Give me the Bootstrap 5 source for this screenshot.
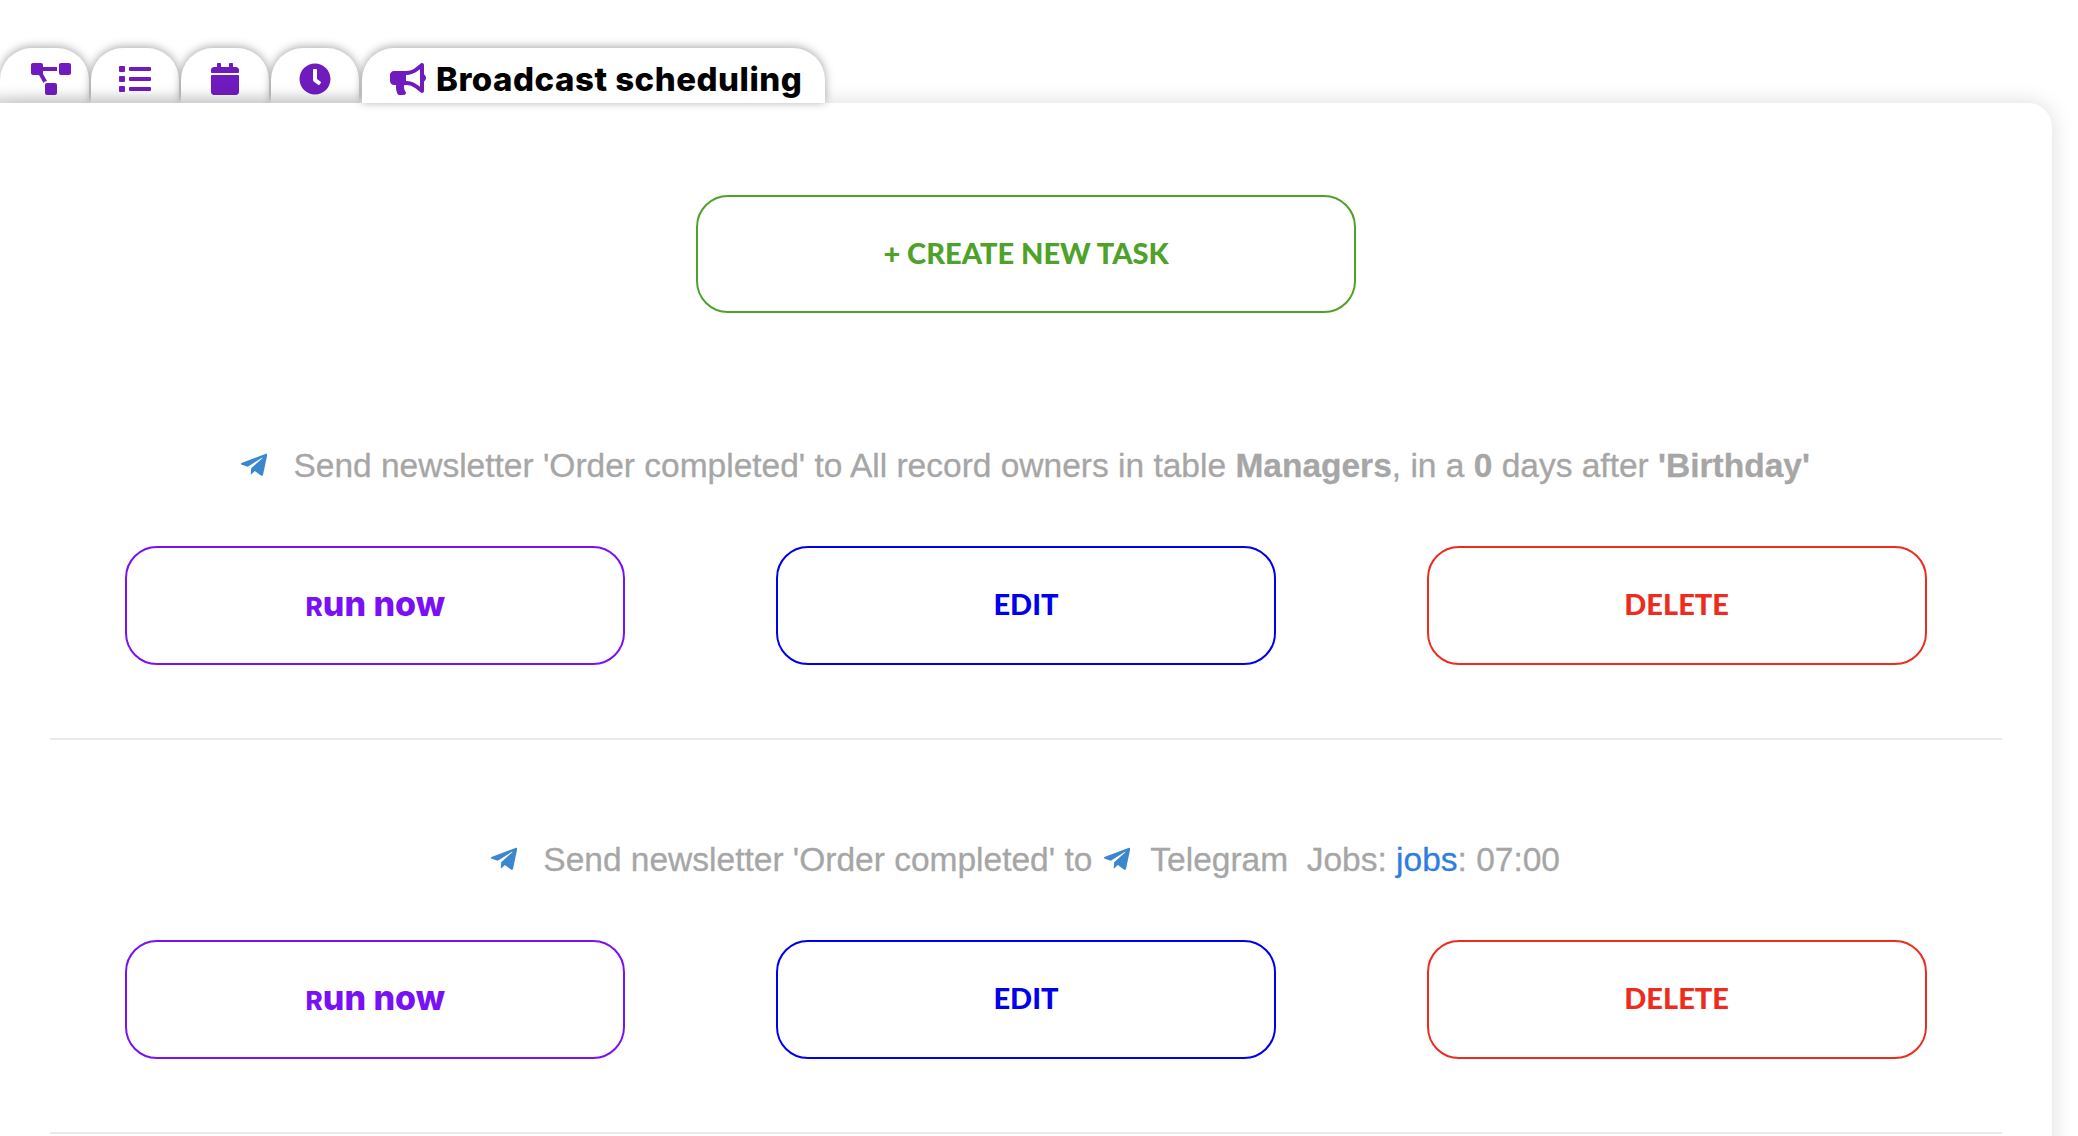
<!DOCTYPE html>
<html lang="en">
<head>
  <meta charset="UTF-8">
  <title>Broadcast scheduling</title>
  <meta name="viewport" content="width=device-width, initial-scale=1.0">
  <link href="https://cdn.jsdelivr.net/npm/bootstrap@5.3.0/dist/css/bootstrap.min.css" rel="stylesheet">
  <style>
    html, body { height: 100%; overflow: hidden; background: #fff; }
    .page-wrap { padding: 48px 26px 0 0; }
    .tab-strip { gap: 2px; height: 55px; }
    .tab-item {
      width: 88px; height: 55px; padding-top: 7px; background: #fff; color: #6f1bbd;
      border-radius: 32px 32px 0 0;
      box-shadow: 0 -1px 10px rgba(0,0,0,.36), inset 0 -16px 12px -10px rgba(0,0,0,.14);
    }
    .tab-item svg { height: 32px; fill: currentColor; display: block; }
    .tab-item.first-tab { width: 89px; padding-left: 12px; }
    .tab-item.active-tab {
      width: 463px; position: relative; z-index: 2; justify-content: flex-start;
      padding-left: 28px; gap: 10px; margin-left: 1px;
      box-shadow: 0 -1px 10px rgba(0,0,0,.36);
    }
    .tab-title { font-family: Inter, "Noto Sans", sans-serif; font-weight: 800; font-size: 33px; letter-spacing: .5px; color: #000; margin-top: 2px; }
    .panel-card {
      position: relative; z-index: 1; border: 0; border-radius: 0 24px 0 0;
      padding: 92px 50px 300px 50px; box-shadow: 0 0 22px rgba(0,0,0,.14);
    }
    .action-btn {
      --bs-btn-border-width: 2px; --bs-btn-border-radius: 32px;
      background: #fff; height: 119px; width: 500px; padding-bottom: 9px;
      font-family: Lato, "Noto Sans", sans-serif; font-weight: 900; font-size: 29px;
      display: flex; align-items: center; justify-content: center;
    }
    .create-btn { width: 660px; height: 118px; color: #4ea22a; border-color: #4ea22a; margin-bottom: 129px; }
    .run-btn { color: #7a10f5; border-color: #7a10f5; }
    .run-label { display: inline-block; font-family: Inter, "Noto Sans", sans-serif; font-weight: 800; font-size: 34px; margin-top: -2px; }
    .run-label::first-letter { font-size: 26px; }
    .edit-btn { color: #0000ee; border-color: #0000ee; }
    .del-btn { color: #ee2c1e; border-color: #ee2c1e; }
    .task-line {
      font-family: "Liberation Sans", Arial, sans-serif; font-size: 33.5px; line-height: 48px;
      color: #a6a6a6; text-align: center; margin-bottom: 56px; padding-right: 3px;
      -webkit-text-stroke: .3px #a6a6a6;
    }
    .task-line b { font-weight: 700; }
    .task-line a { color: #2f7de1; -webkit-text-stroke: .3px #2f7de1; text-decoration: none; }
    .plane { height: 30px; width: 30px; fill: #3a87cd; stroke: none; vertical-align: -3px; }
    .plane.lead-plane { margin-right: 15px; }
    .sep { border: 0; border-top: 2px solid #e9e9ef; opacity: 1; margin: 73px 0 96px; }
  </style>
</head>
<body>
  <div class="page-wrap">
    <div class="tab-strip d-flex">
      <div class="tab-item first-tab d-flex align-items-center justify-content-center">
        <svg viewBox="0 0 640 512"><path d="M384 320H256c-17.67 0-32 14.33-32 32v128c0 17.67 14.33 32 32 32h128c17.67 0 32-14.33 32-32V352c0-17.67-14.33-32-32-32zM192 32c0-17.67-14.33-32-32-32H32C14.33 0 0 14.33 0 32v128c0 17.67 14.33 32 32 32h95.72l73.16 128.04C211.98 300.98 232.4 288 256 288h.28L192 175.51V128h224V64H192V32zM608 0H480c-17.67 0-32 14.33-32 32v128c0 17.67 14.33 32 32 32h128c17.67 0 32-14.33 32-32V32c0-17.67-14.33-32-32-32z"/></svg>
      </div>
      <div class="tab-item d-flex align-items-center justify-content-center">
        <svg viewBox="0 0 512 512"><path d="M80 368H16a16 16 0 0 0-16 16v64a16 16 0 0 0 16 16h64a16 16 0 0 0 16-16v-64a16 16 0 0 0-16-16zm0-320H16A16 16 0 0 0 0 64v64a16 16 0 0 0 16 16h64a16 16 0 0 0 16-16V64a16 16 0 0 0-16-16zm0 160H16a16 16 0 0 0-16 16v64a16 16 0 0 0 16 16h64a16 16 0 0 0 16-16v-64a16 16 0 0 0-16-16zm416 176H176a16 16 0 0 0-16 16v32a16 16 0 0 0 16 16h320a16 16 0 0 0 16-16v-32a16 16 0 0 0-16-16zm0-320H176a16 16 0 0 0-16 16v32a16 16 0 0 0 16 16h320a16 16 0 0 0 16-16V80a16 16 0 0 0-16-16zm0 160H176a16 16 0 0 0-16 16v32a16 16 0 0 0 16 16h320a16 16 0 0 0 16-16v-32a16 16 0 0 0-16-16z"/></svg>
      </div>
      <div class="tab-item d-flex align-items-center justify-content-center">
        <svg viewBox="0 0 448 512"><path d="M12 192h424c6.6 0 12 5.4 12 12v260c0 26.5-21.5 48-48 48H48c-26.5 0-48-21.5-48-48V204c0-6.6 5.4-12 12-12zm436-44v-36c0-26.5-21.5-48-48-48h-48V12c0-6.6-5.4-12-12-12h-40c-6.6 0-12 5.4-12 12v52H160V12c0-6.6-5.4-12-12-12h-40c-6.6 0-12 5.4-12 12v52H48C21.5 64 0 85.5 0 112v36c0 6.6 5.4 12 12 12h424c6.6 0 12-5.4 12-12z"/></svg>
      </div>
      <div class="tab-item d-flex align-items-center justify-content-center">
        <svg viewBox="0 0 512 512"><path d="M256,8C119,8,8,119,8,256S119,504,256,504,504,393,504,256,393,8,256,8Zm92.49,313h0l-20,25a16,16,0,0,1-22.49,2.5h0l-67-49.72a40,40,0,0,1-15-31.23V112a16,16,0,0,1,16-16h32a16,16,0,0,1,16,16V256l58,42.5A16,16,0,0,1,348.49,321Z"/></svg>
      </div>
      <div class="tab-item active-tab d-flex align-items-center">
        <svg viewBox="0 0 576 512"><path d="M576 240c0-23.63-12.95-44.04-32-55.12V32.01C544 23.26 537.02 0 512 0c-7.12 0-14.19 2.38-19.98 7.02l-85.03 68.03C364.28 109.19 310.66 128 256 128H64c-35.35 0-64 28.65-64 64v96c0 35.35 28.65 64 64 64h33.7c-1.39 10.48-2.18 21.14-2.18 32 0 39.77 9.26 77.35 25.56 110.94 5.19 10.69 16.52 17.06 28.4 17.06h74.28c26.05 0 41.69-29.84 25.9-50.56-16.4-21.52-26.15-48.36-26.15-77.44 0-11.11 1.62-21.79 4.41-32H256c54.66 0 108.28 18.81 150.98 52.95l85.03 68.03a32.023 32.023 0 0 0 19.98 7.02c24.92 0 32-22.78 32-32V295.13C563.05 284.04 576 263.63 576 240zm-96 141.42l-33.05-26.44C392.95 311.78 325.12 288 256 288v-96c69.12 0 136.95-23.78 190.95-66.98L480 98.58v282.84z"/></svg>
        <span class="tab-title">Broadcast scheduling</span>
      </div>
    </div>

    <div class="card panel-card">
      <button class="btn action-btn create-btn mx-auto">+ CREATE NEW TASK</button>

      <div class="task-line">
        <svg class="plane lead-plane" viewBox="0 0 448 512"><path d="M446.7 98.6l-67.6 318.8c-5.1 22.5-18.4 28.1-37.3 17.5l-103-75.9-49.7 47.8c-5.5 5.5-10.1 10.1-20.7 10.1l7.4-104.9 190.9-172.5c8.3-7.4-1.8-11.5-12.9-4.1L117.8 284 16.2 252.2c-22.1-6.9-22.5-22.1 4.6-32.7L418.2 66.4c18.4-6.9 34.5 4.1 28.5 32.2z"/></svg>
        Send newsletter 'Order completed' to All record owners in table <b>Managers</b>, in a <b>0</b> days after <b>'Birthday'</b>
      </div>
      <div class="row g-0">
        <div class="col-4 d-flex justify-content-center"><button class="btn action-btn run-btn"><span class="run-label">Run now</span></button></div>
        <div class="col-4 d-flex justify-content-center"><button class="btn action-btn edit-btn">EDIT</button></div>
        <div class="col-4 d-flex justify-content-center"><button class="btn action-btn del-btn">DELETE</button></div>
      </div>
      <hr class="sep">

      <div class="task-line">
        <svg class="plane lead-plane" viewBox="0 0 448 512"><path d="M446.7 98.6l-67.6 318.8c-5.1 22.5-18.4 28.1-37.3 17.5l-103-75.9-49.7 47.8c-5.5 5.5-10.1 10.1-20.7 10.1l7.4-104.9 190.9-172.5c8.3-7.4-1.8-11.5-12.9-4.1L117.8 284 16.2 252.2c-22.1-6.9-22.5-22.1 4.6-32.7L418.2 66.4c18.4-6.9 34.5 4.1 28.5 32.2z"/></svg>
        Send newsletter 'Order completed' to
        <svg class="plane" viewBox="0 0 448 512"><path d="M446.7 98.6l-67.6 318.8c-5.1 22.5-18.4 28.1-37.3 17.5l-103-75.9-49.7 47.8c-5.5 5.5-10.1 10.1-20.7 10.1l7.4-104.9 190.9-172.5c8.3-7.4-1.8-11.5-12.9-4.1L117.8 284 16.2 252.2c-22.1-6.9-22.5-22.1 4.6-32.7L418.2 66.4c18.4-6.9 34.5 4.1 28.5 32.2z"/></svg>
        &nbsp;Telegram &nbsp;Jobs: <a href="#">jobs</a>: 07:00
      </div>
      <div class="row g-0">
        <div class="col-4 d-flex justify-content-center"><button class="btn action-btn run-btn"><span class="run-label">Run now</span></button></div>
        <div class="col-4 d-flex justify-content-center"><button class="btn action-btn edit-btn">EDIT</button></div>
        <div class="col-4 d-flex justify-content-center"><button class="btn action-btn del-btn">DELETE</button></div>
      </div>
      <hr class="sep">
    </div>
  </div>
  <script src="https://cdn.jsdelivr.net/npm/bootstrap@5.3.0/dist/js/bootstrap.bundle.min.js"></script>
</body>
</html>
